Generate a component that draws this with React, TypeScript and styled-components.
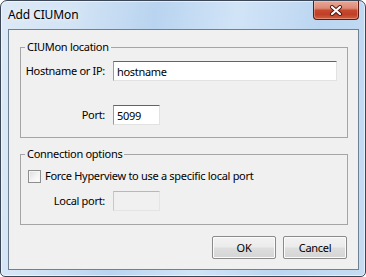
import React from 'react';
import styled, { createGlobalStyle } from 'styled-components';

const Global = createGlobalStyle`
  html, body { margin: 0; padding: 0; background: #ffffff; }
  body { font-family: "Segoe UI", "Noto Sans", sans-serif; font-size: 11px; letter-spacing: -0.3px; color: #000; }
  * { box-sizing: border-box; }
`;

const Window = styled.div`
  width: 366px;
  height: 277px;
  border: 1px solid #3b4757;
  border-radius: 7px 7px 5px 5px;
  background: linear-gradient(100deg, #dde9f6 0%, #d3e4f5 18%, #b9d4f0 38%, #d1e4f7 58%, #bcd6f1 78%, #c5dcf3 100%);
  box-shadow: inset 0 0 0 1px rgba(255, 255, 255, 0.55);
  display: flex;
  flex-direction: column;
  padding: 0 6px 6px 7px;
`;

const TitleBar = styled.div`
  height: 28px;
  display: flex;
  align-items: flex-start;
`;

const Title = styled.span`
  margin-top: 6px;
  font-size: 12px;
  line-height: 16px;
  letter-spacing: -0.1px;
  color: #000;
  text-shadow: 0 0 6px rgba(255, 255, 255, 0.9);
`;

const CloseButton = styled.div`
  margin-left: auto;
  width: 46px;
  height: 19px;
  border: 1px solid #5e1a10;
  border-top: none;
  border-radius: 0 0 4px 4px;
  background: linear-gradient(#e9a797 0%, #dc8b76 40%, #c8482f 52%, #c03f27 75%, #d46140 100%);
  box-shadow: inset 0 0 0 1px rgba(255, 230, 220, 0.35);
  display: flex;
  align-items: center;
  justify-content: center;
`;

const Client = styled.div`
  flex: 1;
  border: 1px solid #6f8093;
  background: #f0f0f0;
  display: flex;
  flex-direction: column;
  padding: 9px 10px 0 11px;
`;

const Group = styled.fieldset<{ $gap?: number }>`
  margin: ${(p) => p.$gap ?? 0}px 0 0 0;
  padding: 0;
  border: 1px solid #a5a5a5;
  min-width: 0;
`;

const Legend = styled.legend`
  margin-left: 4px;
  padding: 0 2px;
  line-height: 16px;
`;

const FormGrid = styled.div<{ $top: number; $bottom: number; $rowGap: number }>`
  display: grid;
  grid-template-columns: 84px 1fr;
  column-gap: 8px;
  row-gap: ${(p) => p.$rowGap}px;
  align-items: center;
  padding: ${(p) => p.$top}px 10px ${(p) => p.$bottom}px 0;
`;

const Label = styled.label`
  justify-self: end;
  line-height: 16px;
  white-space: nowrap;
`;

const TextBox = styled.input<{ $w?: number }>`
  width: ${(p) => (p.$w ? `${p.$w}px` : '100%')};
  height: 20px;
  margin: 0;
  padding: 0 3px;
  font: inherit;
  letter-spacing: inherit;
  color: #000;
  background: #fff;
  border-top: 1px solid #646464;
  border-left: 1px solid #9a9a9a;
  border-right: 1px solid #e2e2e2;
  border-bottom: 1px solid #e2e2e2;
  outline: none;
  &:disabled {
    background: #f0f0f0;
    border-top-color: #b8b8b8;
    border-left-color: #c8c8c8;
    border-right-color: #e4e4e4;
    border-bottom-color: #e4e4e4;
  }
`;

const CheckRow = styled.div`
  grid-column: 1 / span 2;
  display: flex;
  align-items: center;
  gap: 4px;
  padding-left: 7px;
`;

const CheckBox = styled.span`
  width: 13px;
  height: 13px;
  border: 1px solid #8e8f8f;
  background: linear-gradient(135deg, #dcdcdc 0%, #f4f4f4 55%, #ffffff 100%);
  box-shadow: inset 0 0 0 1px #f6f6f6;
`;

const CheckText = styled.span`
  line-height: 16px;
`;

const ButtonRow = styled.div`
  display: flex;
  justify-content: flex-end;
  gap: 7px;
  margin-top: 11px;
  padding-right: 1px;
`;

const Button = styled.button`
  width: 64px;
  height: 23px;
  margin: 0;
  padding: 0;
  font: inherit;
  letter-spacing: inherit;
  color: #000;
  border: 1px solid #8a8a8a;
  border-radius: 2px;
  background: linear-gradient(#f2f2f2 0%, #ebebeb 48%, #dedede 52%, #d4d4d4 100%);
  box-shadow: inset 0 0 0 1px #fbfbfb;
`;

function CloseGlyph() {
  return (
    <svg width="14" height="11" viewBox="0 0 14 11">
      <path d="M3 2 L11 9 M11 2 L3 9" stroke="#4a150c" strokeWidth="4" strokeLinecap="round" />
      <path d="M3 2 L11 9 M11 2 L3 9" stroke="#ffffff" strokeWidth="2.2" strokeLinecap="round" />
    </svg>
  );
}

export default function App() {
  return (
    <>
      <Global />
      <Window>
        <TitleBar>
          <Title>Add CIUMon</Title>
          <CloseButton>
            <CloseGlyph />
          </CloseButton>
        </TitleBar>
        <Client>
          <Group>
            <Legend>CIUMon location</Legend>
            <FormGrid $top={6} $bottom={12} $rowGap={24}>
              <Label>Hostname or IP:</Label>
              <TextBox defaultValue="hostname" />
              <Label>Port:</Label>
              <TextBox $w={47} defaultValue="5099" />
            </FormGrid>
          </Group>
          <Group $gap={8}>
            <Legend>Connection options</Legend>
            <FormGrid $top={6} $bottom={13} $rowGap={7}>
              <CheckRow>
                <CheckBox />
                <CheckText>Force Hyperview to use a specific local port</CheckText>
              </CheckRow>
              <Label>Local port:</Label>
              <TextBox $w={47} disabled defaultValue="" />
            </FormGrid>
          </Group>
          <ButtonRow>
            <Button>OK</Button>
            <Button>Cancel</Button>
          </ButtonRow>
        </Client>
      </Window>
    </>
  );
}
